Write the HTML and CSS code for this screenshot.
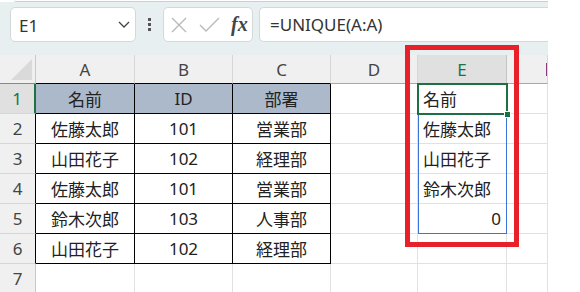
FILE: index.html
```html
<!DOCTYPE html>
<html lang="ja">

<head>
    <meta charset="UTF-8">
    <title>UNIQUE</title>
    <link rel="stylesheet" href="styles.css">
</head>

<body>
    <div class="sheet">
        <div class="ribbon"></div>

        <div class="formula-bar">
            <div class="namebox">
                <span class="name">E1</span>
                <svg class="chev" width="12" height="7" viewBox="0 0 12 7"><path d="M1 1l5 5 5-5" fill="none" stroke="#444" stroke-width="1.3"/></svg>
            </div>
            <div class="grip"><i></i><i></i><i></i></div>
            <div class="fxbox">
                <svg width="16" height="16" viewBox="0 0 16 16"><path d="M1 1l14 14M15 1L1 15" stroke="#b9b9b9" stroke-width="1.4" fill="none"/></svg>
                <svg width="21" height="16" viewBox="0 0 21 16"><path d="M1 8l6 6L20 1" stroke="#b9b9b9" stroke-width="1.4" fill="none"/></svg>
                <span class="fx">fx</span>
            </div>
            <div class="formula">=UNIQUE(A:A)</div>
        </div>

        <div class="grid">
            <div class="corner"><span class="tri"></span></div>
            <div class="colhdr tb">A</div>
            <div class="colhdr tb">B</div>
            <div class="colhdr tb">C</div>
            <div class="colhdr">D</div>
            <div class="colhdr sel">E</div>
            <div class="colhdr f"><span class="fcut"></span></div>

            <div class="rowhdr sel">1</div>
            <div class="cell t head">名前</div>
            <div class="cell t head">ID</div>
            <div class="cell t head">部署</div>
            <div class="cell"></div>
            <div class="cell e">名前</div>
            <div class="cell"></div>

            <div class="rowhdr tl">2</div>
            <div class="cell t">佐藤太郎</div>
            <div class="cell t">101</div>
            <div class="cell t">営業部</div>
            <div class="cell"></div>
            <div class="cell e">佐藤太郎</div>
            <div class="cell"></div>

            <div class="rowhdr tl">3</div>
            <div class="cell t">山田花子</div>
            <div class="cell t">102</div>
            <div class="cell t">経理部</div>
            <div class="cell"></div>
            <div class="cell e">山田花子</div>
            <div class="cell"></div>

            <div class="rowhdr tl">4</div>
            <div class="cell t">佐藤太郎</div>
            <div class="cell t">101</div>
            <div class="cell t">営業部</div>
            <div class="cell"></div>
            <div class="cell e">鈴木次郎</div>
            <div class="cell"></div>

            <div class="rowhdr tl">5</div>
            <div class="cell t">鈴木次郎</div>
            <div class="cell t">103</div>
            <div class="cell t">人事部</div>
            <div class="cell"></div>
            <div class="cell e num">0</div>
            <div class="cell"></div>

            <div class="rowhdr tl">6</div>
            <div class="cell t">山田花子</div>
            <div class="cell t">102</div>
            <div class="cell t">経理部</div>
            <div class="cell"></div>
            <div class="cell"></div>
            <div class="cell"></div>

            <div class="rowhdr">7</div>
            <div class="cell"></div>
            <div class="cell"></div>
            <div class="cell"></div>
            <div class="cell"></div>
            <div class="cell"></div>
            <div class="cell"></div>

            <div class="spill"></div>
            <div class="active"><span class="handle"></span></div>
        </div>

        <div class="mark"></div>
    </div>
</body>

</html>
```

FILE: styles.css
```css
body {
    margin: 0;
    background: #fff;
    font-family: "Noto Sans", "Noto Sans CJK JP", sans-serif;
    color: #222;
}

.sheet {
    position: relative;
    width: 548px;
    height: 292px;
    overflow: hidden;
}

.ribbon {
    height: 1px;
    margin-left: 14px;
    background: #fff;
    border-bottom: 1px solid #c9d0d3;
    border-radius: 0 0 0 4px;
}

.formula-bar {
    display: flex;
    align-items: center;
    height: 53px;
    padding-left: 10px;
    background: #e7eff1;
    box-sizing: border-box;
    padding-bottom: 8px;
}

.namebox {
    display: flex;
    align-items: center;
    justify-content: space-between;
    width: 126px;
    height: 35px;
    box-sizing: border-box;
    padding: 0 5px 0 8px;
    background: #fff;
    border: 1px solid #d3d8da;
    border-radius: 5px;
}

.namebox .name {
    font-size: 17px;
    color: #333;
    padding-top: 2px;
}

.grip {
    display: flex;
    flex-direction: column;
    gap: 2px;
    width: 27px;
    align-items: center;
}

.grip i {
    width: 3px;
    height: 3px;
    background: #555;
}

.fxbox {
    display: flex;
    align-items: center;
    gap: 12px;
    width: 90px;
    height: 35px;
    box-sizing: border-box;
    padding-left: 7px;
    background: #fff;
    border: 1px solid #d3d8da;
    border-radius: 5px;
}

.fxbox .fx {
    font-family: "Liberation Serif", serif;
    font-style: italic;
    font-weight: bold;
    font-size: 20px;
    color: #444;
    margin-left: -1px;
}

.formula {
    flex: 1;
    margin-left: 6px;
    height: 35px;
    box-sizing: border-box;
    padding: 3px 0 0 10px;
    background: #fff;
    border: 1px solid #d3d8da;
    border-right: none;
    border-radius: 5px 0 0 5px;
    font-size: 17px;
    color: #333;
    line-height: 28px;
}

.grid {
    position: relative;
    display: grid;
    grid-template-columns: 36px 99px 98px 98px 87px 89px 41px;
    grid-template-rows: 29px repeat(7, 30px);
}

.grid > div {
    box-sizing: border-box;
}

.corner {
    position: relative;
    background: #f0f0f0;
    border-right: 1px solid #c8c8c8;
    border-bottom: 1px solid #888;
}

.corner .tri {
    position: absolute;
    right: 3px;
    bottom: 3px;
    width: 0;
    height: 0;
    border-left: 21px solid transparent;
    border-bottom: 21px solid #dadada;
}

.colhdr {
    display: flex;
    align-items: center;
    justify-content: center;
    background: #f0f0f0;
    border-right: 1px solid #d6d6d6;
    border-bottom: 1px solid #a8a8a8;
    font-size: 17px;
    color: #444;
}

.colhdr.tb {
    border-bottom-color: #000;
}

.colhdr.sel {
    background: #e0e0e0;
    color: #1d7044;
    border-right-color: #c3c3c3;
}

.colhdr.f {
    justify-content: flex-start;
    padding-left: 39px;
}

/* F is cut off by the window edge, only its stem shows */
.colhdr.f .fcut {
    width: 2px;
    height: 13px;
    background: #8a3b78;
}

.rowhdr {
    display: flex;
    align-items: center;
    justify-content: center;
    background: #f0f0f0;
    border-right: 1px solid #c8c8c8;
    border-bottom: 1px solid #d6d6d6;
    font-size: 17px;
    color: #444;
}

.rowhdr.tl {
    border-right-color: #000;
}

.rowhdr.sel {
    background: #e0e0e0;
    color: #1d7044;
    border-right: 2px solid #1d7044;
}

.cell {
    display: flex;
    align-items: center;
    border-right: 1px solid #e1e1e1;
    border-bottom: 1px solid #e1e1e1;
    font-size: 17px;
    color: #222;
    white-space: nowrap;
}

.cell.t {
    justify-content: center;
    border-right-color: #000;
    border-bottom-color: #000;
    background: #fff;
}

.cell.head {
    background: #acb9ca;
}

.cell.e {
    padding-left: 5px;
}

.cell.num {
    justify-content: flex-end;
    padding-right: 5px;
}

.spill {
    position: absolute;
    left: 418px;
    top: 29px;
    width: 89px;
    height: 150px;
    box-sizing: border-box;
    border: 1px solid #3b76d6;
}

.active {
    position: absolute;
    left: 417px;
    top: 28px;
    width: 91px;
    height: 32px;
    box-sizing: border-box;
    border: 2px solid #1d7044;
}

.active .handle {
    position: absolute;
    right: -5px;
    bottom: -5px;
    width: 7px;
    height: 7px;
    box-sizing: border-box;
    background: #1d7044;
    border: 1px solid #fff;
}

.mark {
    position: absolute;
    left: 405px;
    top: 45px;
    width: 114px;
    height: 202px;
    box-sizing: border-box;
    border: 5px solid #e8202a;
}
```
